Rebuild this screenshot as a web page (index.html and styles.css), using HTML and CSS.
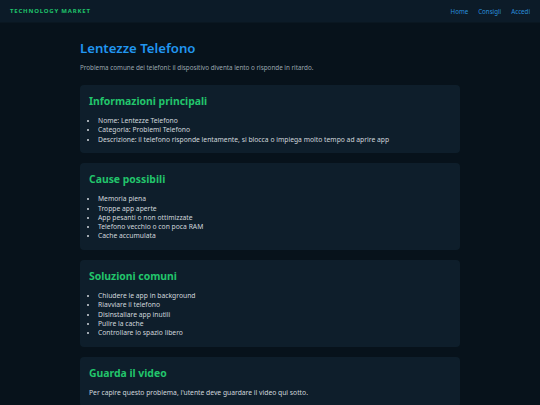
FILE: index.html
```html
<!DOCTYPE html>
<html lang="it">
<head>
<meta charset="utf-8">
<title>Lentezze Telefono</title>
<link rel="stylesheet" href="styles.css">
</head>
<body>
<header class="topbar">
  <div class="brand">TECHNOLOGY MARKET</div>
  <nav class="nav">
    <a href="#">Home</a>
    <a href="#">Consigli</a>
    <a href="#">Accedi</a>
  </nav>
</header>
<main class="container">
  <h1 class="title">Lentezze Telefono</h1>
  <p class="subtitle">Problema comune dei telefoni: il dispositivo diventa lento o risponde in ritardo.</p>

  <section class="card">
    <h2>Informazioni principali</h2>
    <ul>
      <li>Nome: Lentezze Telefono</li>
      <li>Categoria: Problemi Telefono</li>
      <li>Descrizione: il telefono risponde lentamente, si blocca o impiega molto tempo ad aprire app</li>
    </ul>
  </section>

  <section class="card">
    <h2>Cause possibili</h2>
    <ul>
      <li>Memoria piena</li>
      <li>Troppe app aperte</li>
      <li>App pesanti o non ottimizzate</li>
      <li>Telefono vecchio o con poca RAM</li>
      <li>Cache accumulata</li>
    </ul>
  </section>

  <section class="card">
    <h2>Soluzioni comuni</h2>
    <ul>
      <li>Chiudere le app in background</li>
      <li>Riavviare il telefono</li>
      <li>Disinstallare app inutili</li>
      <li>Pulire la cache</li>
      <li>Controllare lo spazio libero</li>
    </ul>
  </section>

  <section class="card">
    <h2>Guarda il video</h2>
    <p class="text">Per capire questo problema, l'utente deve guardare il video qui sotto.</p>
  </section>
</main>
</body>
</html>
```

FILE: styles.css
```css
* { box-sizing: border-box; }
html, body { margin: 0; padding: 0; }
body {
  background: #07121b;
  color: #d3d9df;
  font-family: "Noto Sans", "Open Sans", sans-serif;
  overflow: hidden;
}
.topbar {
  height: 23px;
  background: #0c1b28;
  display: flex;
  align-items: center;
  justify-content: space-between;
  padding: 0 10px;
  border-bottom: 1px solid #0a1721;
}
.brand {
  color: #1fc26a;
  font-size: 6px;
  font-weight: 700;
  letter-spacing: 0.8px;
}
.nav {
  display: flex;
  gap: 10px;
}
.nav a {
  color: #2a8fdc;
  text-decoration: none;
  font-size: 6.2px;
}
.container {
  width: 380px;
  margin: 0 auto;
  padding-top: 15px;
}
.title {
  margin: 0;
  color: #2196f0;
  font-size: 13.2px;
  font-weight: 600;
  line-height: 20px;
}
.subtitle {
  margin: 5px 0 13px;
  font-size: 6.3px;
  color: #9aa5ae;
  line-height: 9px;
}
.card {
  background: #0e1e2b;
  border-radius: 4px;
  padding: 9px 9px 9.5px;
  margin-bottom: 10px;
}
.card h2 {
  margin: 0 0 8px;
  color: #22c56b;
  font-size: 10.4px;
  font-weight: 700;
  line-height: 14px;
}
.card ul {
  margin: 0;
  padding-left: 9px;
  font-size: 6.75px;
  line-height: 9.25px;
  color: #d0d6dc;
}
.text {
  margin: 0;
  font-size: 6.75px;
  line-height: 9.25px;
  color: #d0d6dc;
}
```
